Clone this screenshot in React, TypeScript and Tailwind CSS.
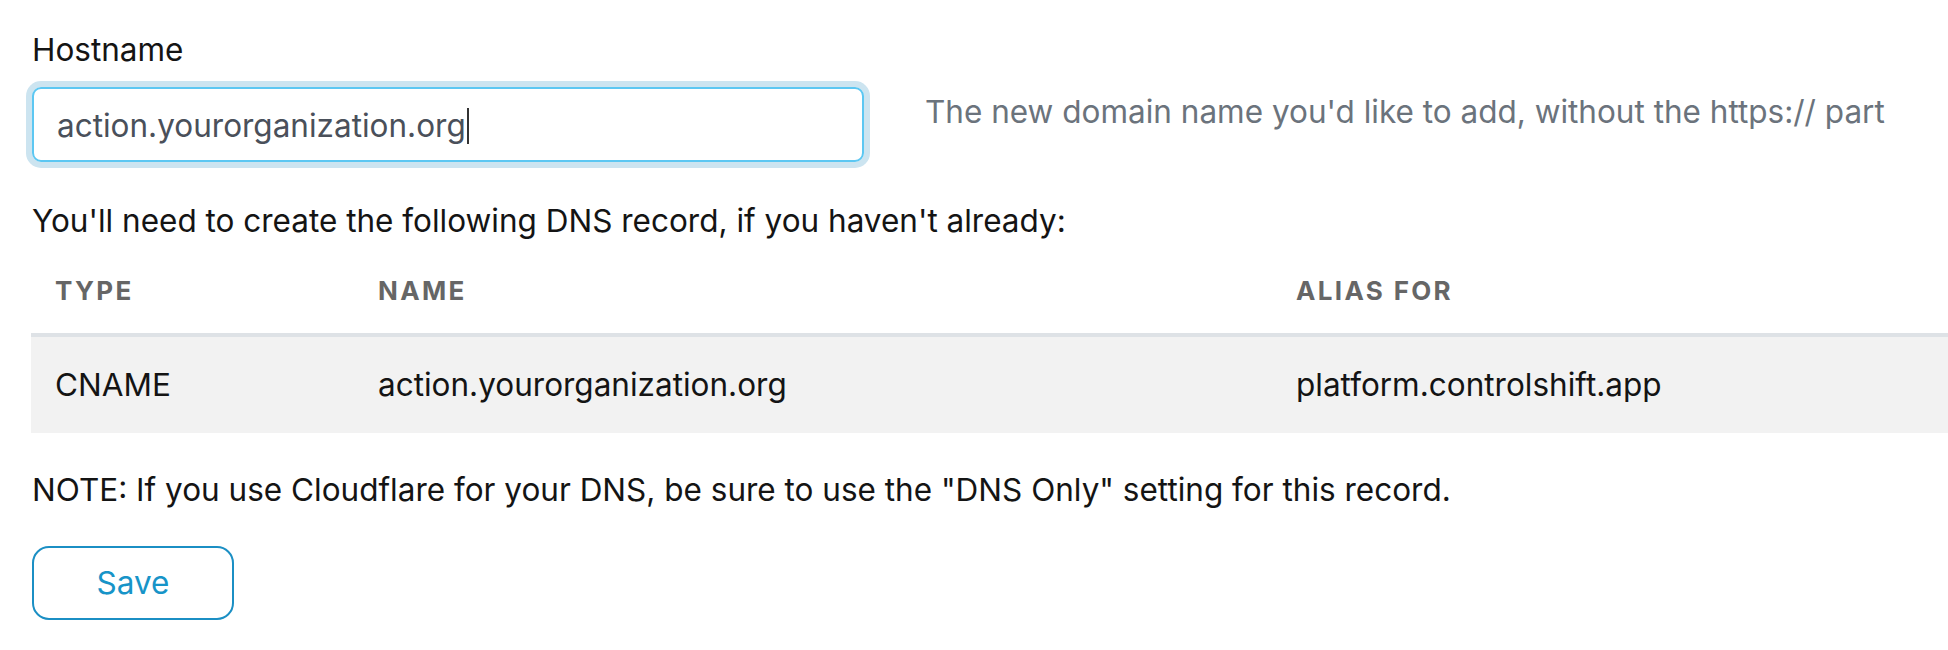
import React from "react";

export default function App() {
  return (
    <div
      className="w-[1948px] h-[650px] bg-white overflow-hidden text-[#141414]"
      style={{ fontFamily: "Inter, 'Noto Sans', sans-serif" }}
    >
      <div className="pt-[30px]">
        <div className="pl-[32px] text-[31.5px] leading-[40px] mb-[17px]">Hostname</div>
        <div className="flex items-start pl-[32px]">
          <div className="w-[832px] h-[75px] shrink-0 rounded-[9px] border-2 border-[#5cc7f2] shadow-[0_0_0_6px_#cce4f0] flex items-center pl-[23px] pt-[3px] text-[31.5px] leading-[40px] text-[#4a505a]">
            <span>action.yourorganization.org</span>
            <span className="inline-block w-[2px] h-[36px] bg-[#333] ml-[1px]"></span>
          </div>
          <div className="ml-[61px] mt-[5px] text-[31.5px] leading-[40px] text-[#6b737c] whitespace-nowrap">
            The new domain name you'd like to add, without the https:// part
          </div>
        </div>
        <div className="pl-[32px] mt-[39px] text-[31.5px] leading-[40px]">
          You'll need to create the following DNS record, if you haven't already:
        </div>
        <div className="ml-[31px]">
          <div className="grid grid-cols-[323px_918px_1fr] h-[96px] items-center border-b-4 border-[#dee2e6] text-[26px] font-bold tracking-[0.09em] text-[#666666] pt-[6px]">
            <div className="pl-[24px]">TYPE</div>
            <div className="pl-[24px]">NAME</div>
            <div className="pl-[24px]">ALIAS FOR</div>
          </div>
          <div className="grid grid-cols-[323px_918px_1fr] h-[96px] items-center bg-[#f2f2f2] text-[31.5px] leading-[40px]">
            <div className="pl-[24px]">CNAME</div>
            <div className="pl-[24px]">action.yourorganization.org</div>
            <div className="pl-[24px]">platform.controlshift.app</div>
          </div>
        </div>
        <div className="pl-[32px] mt-[37px] text-[31.5px] leading-[40px]">
          NOTE: If you use Cloudflare for your DNS, be sure to use the "DNS Only" setting for this record.
        </div>
        <div className="pl-[32px] mt-[36px]">
          <button className="w-[202px] h-[74px] rounded-[17px] border-2 border-[#1b8fc4] text-[#1794c8] text-[31.5px] leading-[40px] bg-white">
            Save
          </button>
        </div>
      </div>
    </div>
  );
}
